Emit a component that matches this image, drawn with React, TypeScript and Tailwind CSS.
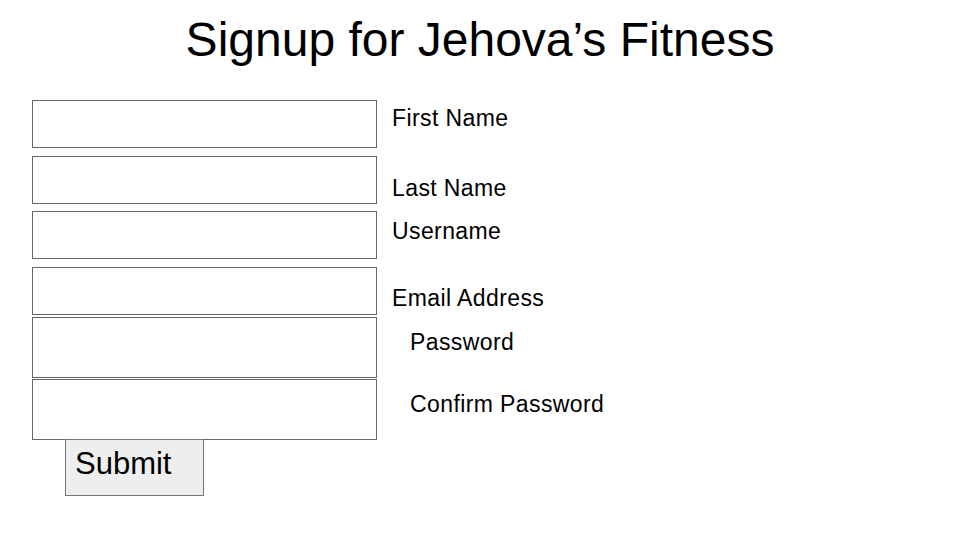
const fields = [
  { label: "First Name", boxH: "h-[48px]", boxMt: "mt-0", labelMt: "mt-[7px]", indent: "" },
  { label: "Last Name", boxH: "h-[48px]", boxMt: "mt-[8px]", labelMt: "mt-[47px]", indent: "" },
  { label: "Username", boxH: "h-[48px]", boxMt: "mt-[7px]", labelMt: "mt-[20px]", indent: "" },
  { label: "Email Address", boxH: "h-[48px]", boxMt: "mt-[8px]", labelMt: "mt-[44px]", indent: "" },
  { label: "Password", boxH: "h-[61px]", boxMt: "mt-[2px]", labelMt: "mt-[21px]", indent: "pl-[18px]" },
  { label: "Confirm Password", boxH: "h-[61px]", boxMt: "mt-[1px]", labelMt: "mt-[39px]", indent: "pl-[18px]" },
];

export default function App() {
  return (
    <div className="w-[960px] h-[540px] bg-white text-black font-['Liberation_Sans',Arial,sans-serif] overflow-hidden">
      {/* titel */}
      <div className="h-[100px] pt-[16px]">
        <h1 className="text-[48px] leading-none text-center">Signup for Jehova’s Fitness</h1>
      </div>

      <div className="flex items-start">
        {/* input boxes */}
        <div className="ml-[32px] w-[345px] flex flex-col">
          {fields.map((f) => (
            <div key={f.label} className={`${f.boxMt} ${f.boxH} w-full border border-[#666] bg-white`} />
          ))}
          <div className="-mt-px ml-[33px] w-[139px] h-[57px] border border-[#777] bg-[#eeeeee] pt-[8px] pl-[9px]">
            <span className="text-[31px] leading-none">Submit</span>
          </div>
        </div>

        {/* labels */}
        <div className="ml-[15px] flex flex-col">
          {fields.map((f) => (
            <div key={f.label} className={`${f.labelMt} ${f.indent} text-[23px] leading-none tracking-[0.4px]`}>
              {f.label}
            </div>
          ))}
        </div>
      </div>
    </div>
  );
}
